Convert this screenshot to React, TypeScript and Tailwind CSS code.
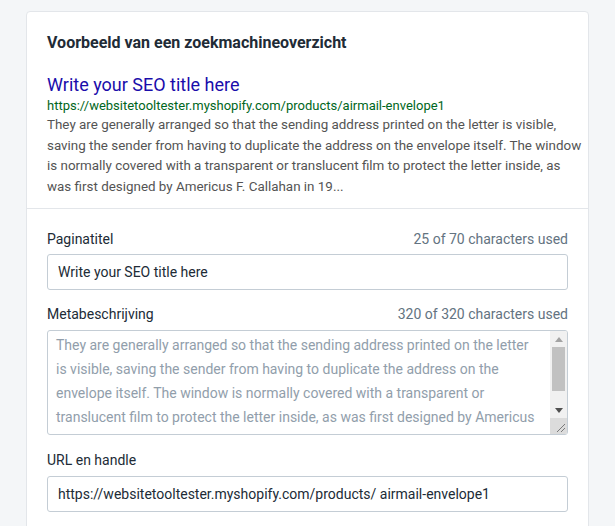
import React from 'react';

const desc =
  'They are generally arranged so that the sending address printed on the letter is visible, saving the sender from having to duplicate the address on the envelope itself. The window is normally covered with a transparent or translucent film to protect the letter inside, as was first designed by Americus F. Callahan in 1901. Such envelopes are popular.';

const previewLines = [
  'They are generally arranged so that the sending address printed on the letter is visible,',
  'saving the sender from having to duplicate the address on the envelope itself. The window',
  'is normally covered with a transparent or translucent film to protect the letter inside, as',
  'was first designed by Americus F. Callahan in 19...',
];

function FakeScrollbar() {
  return (
    <div className="flex w-[17px] shrink-0 flex-col bg-[#f1f1f1]">
      <div className="flex h-[16px] items-center justify-center">
        <svg width="8" height="5" viewBox="0 0 8 5">
          <path d="M0 5 L4 0 L8 5 Z" fill="#a3a3a3" />
        </svg>
      </div>
      <div className="mx-[2px] h-[44px] bg-[#c1c1c1]" />
      <div className="flex-1" />
      <div className="flex h-[16px] items-center justify-center">
        <svg width="8" height="5" viewBox="0 0 8 5">
          <path d="M0 0 L8 0 L4 5 Z" fill="#505050" />
        </svg>
      </div>
      <div className="flex h-[16px] items-end justify-end bg-[#dcdcdc] p-[2px]">
        <svg width="9" height="9" viewBox="0 0 9 9">
          <path d="M9 1 L1 9 M9 5 L5 9" stroke="#7a7a7a" strokeWidth="1" />
        </svg>
      </div>
    </div>
  );
}

export default function App() {
  return (
    <div className="min-h-[526px] bg-[#f4f6f8] pt-[11px] font-['Roboto','Noto_Sans',sans-serif]">
      <div className="mx-[26px] rounded-t-[4px] border border-[#e3e6ea] bg-white">
        <div className="px-[20px] pt-[21px] pb-[11px]">
          <h2 className="text-[16px] font-bold leading-[20px] text-[#212b36]">Voorbeeld van een zoekmachineoverzicht</h2>
          <div className="mt-[20px]">
            <p className="text-[18px] leading-[24px] text-[#1a0dab]">Write your SEO title here</p>
            <p className="text-[13px] leading-[18px] text-[#006621]">https://websitetooltester.myshopify.com/products/airmail-envelope1</p>
            <p className="text-[13.4px] leading-[20.5px] text-[#545454]">
              {previewLines.map((line) => (
                <span key={line} className="block whitespace-nowrap">{line}</span>
              ))}
            </p>
          </div>
        </div>
        <div className="border-t border-[#e3e6ea] px-[20px] pt-[20px] pb-[20px]">
          <div className="flex items-center justify-between text-[14px] leading-[20px]">
            <span className="text-[#212b36]">Paginatitel</span>
            <span className="text-[#637381]">25 of 70 characters used</span>
          </div>
          <input
            readOnly
            value="Write your SEO title here"
            className="mt-[5px] block h-[36px] w-full rounded-[3px] border border-[#c4cdd5] px-[10px] text-[14px] text-[#212b36] outline-none"
          />
          <div className="mt-[14px] flex items-center justify-between text-[14px] leading-[20px]">
            <span className="text-[#212b36]">Metabeschrijving</span>
            <span className="text-[#637381]">320 of 320 characters used</span>
          </div>
          <div className="mt-[6px] flex h-[105px] overflow-hidden rounded-[3px] border border-[#c4cdd5]">
            <textarea
              readOnly
              value={desc}
              className="block h-full min-w-0 flex-1 resize-none overflow-hidden pl-[8px] pr-[10px] pt-[2px] text-[14px] leading-[24px] text-[#919eab] outline-none"
            />
            <FakeScrollbar />
          </div>
          <div className="mt-[15px] text-[14px] leading-[20px] text-[#212b36]">URL en handle</div>
          <input
            readOnly
            value="https://websitetooltester.myshopify.com/products/ airmail-envelope1"
            className="mt-[6px] block h-[36px] w-full rounded-[3px] border border-[#c4cdd5] px-[10px] text-[14px] text-[#212b36] outline-none"
          />
          <div className="h-[40px]" />
        </div>
      </div>
    </div>
  );
}
